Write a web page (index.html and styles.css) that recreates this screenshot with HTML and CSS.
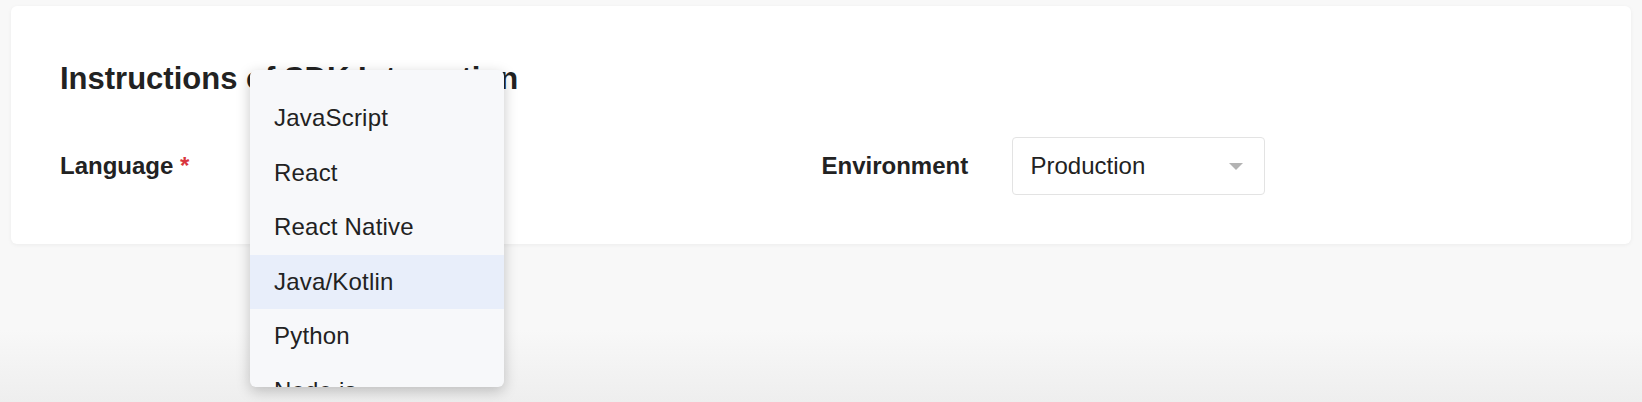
FILE: index.html
```html
<!DOCTYPE html>
<html lang="en">
<head>
<meta charset="utf-8">
<title>SDK Integration</title>
<link rel="stylesheet" href="styles.css">
</head>
<body>
  <div class="page">
    <section class="card">
      <h2 class="card-title">Instructions of SDK Integration</h2>
      <div class="form-row">
        <div class="field">
          <label class="field-label">Language <span class="required">*</span></label>
          <div class="select-wrap">
            <div class="select">
              <span class="select-value"></span>
              <span class="select-arrow"></span>
            </div>
            <ul class="dropdown">
              <li class="option">JavaScript</li>
              <li class="option">React</li>
              <li class="option">React Native</li>
              <li class="option option-active">Java/Kotlin</li>
              <li class="option">Python</li>
              <li class="option">Node.js</li>
            </ul>
          </div>
        </div>
        <div class="field">
          <label class="field-label">Environment</label>
          <div class="select-wrap">
            <div class="select">
              <span class="select-value">Production</span>
              <span class="select-arrow"></span>
            </div>
          </div>
        </div>
      </div>
    </section>
  </div>
</body>
</html>
```

FILE: styles.css
```css
html, body {
  margin: 0;
  padding: 0;
  height: 100%;
}

body {
  font-family: "Liberation Sans", Arial, Helvetica, sans-serif;
  color: #222;
  background: linear-gradient(to bottom, #f8f8f8 0, #f8f8f8 330px, #eeeeee 402px);
}

.page {
  padding: 6px 11px 0 11px;
}

.card {
  background: #fff;
  border-radius: 6px;
  box-shadow: 0 1px 4px rgba(0, 0, 0, 0.05);
  padding: 54px 48px 49px 49px;
}

.card-title {
  margin: 0;
  font-size: 31px;
  line-height: 37px;
  font-weight: 700;
  color: #222;
}

.form-row {
  margin-top: 40px;
  display: grid;
  grid-template-columns: 1fr 1fr;
}

.field {
  display: flex;
  align-items: center;
}

.field-label {
  width: 190px;
  flex: 0 0 190px;
  font-size: 24px;
  font-weight: 700;
  color: #222;
}

.required {
  color: #d9363e;
  font-weight: 700;
}

.select-wrap {
  position: relative;
}

.select {
  box-sizing: border-box;
  width: 253px;
  height: 58px;
  border: 1px solid #e3e3e3;
  border-radius: 4px;
  background: #fff;
  display: flex;
  align-items: center;
  justify-content: space-between;
  padding: 0 21px 0 18px;
  font-size: 24px;
  color: #222;
}

.select-arrow {
  width: 0;
  height: 0;
  border-left: 7px solid transparent;
  border-right: 7px solid transparent;
  border-top: 7px solid #b3b3b3;
}

.dropdown {
  position: absolute;
  top: -67px;
  left: 0;
  width: 254px;
  height: 317px;
  box-sizing: border-box;
  margin: 0;
  padding: 21px 0 0 0;
  list-style: none;
  background: #f7f8fa;
  border-radius: 6px;
  box-shadow: 0 4px 14px rgba(0, 0, 0, 0.22);
  overflow: hidden;
  z-index: 10;
}

.option {
  height: 54.5px;
  line-height: 54.5px;
  padding-left: 24px;
  font-size: 24px;
  letter-spacing: 0.2px;
  color: #222;
}

.option-active {
  background: #e8eefa;
}
```
